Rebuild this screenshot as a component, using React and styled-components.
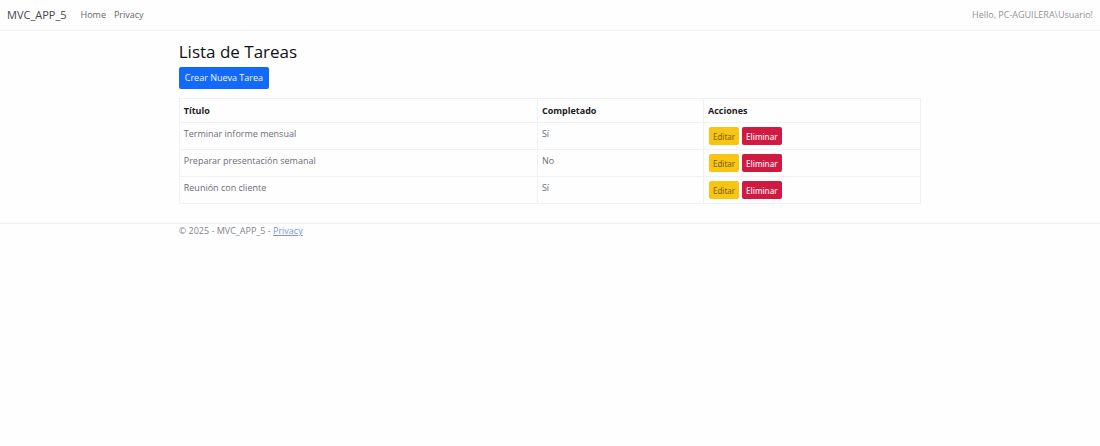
import styled, { createGlobalStyle } from 'styled-components';

const tareas = [
  { id: 1, titulo: 'Terminar informe mensual', completado: true },
  { id: 2, titulo: 'Preparar presentación semanal', completado: false },
  { id: 3, titulo: 'Reunión con cliente', completado: true },
];

const App = () => {
  return (
    <>
      <GlobalStyle />
      <Header>
        <Brand href="#home">MVC_APP_5</Brand>
        <Nav>
          <NavLink href="#home">Home</NavLink>
          <NavLink href="#privacy">Privacy</NavLink>
        </Nav>
        <Greeting>Hello, PC-AGUILERA\Usuario!</Greeting>
      </Header>
      <Main>
        <Title>Lista de Tareas</Title>
        <CreateButton type="button">Crear Nueva Tarea</CreateButton>
        <Table>
          <colgroup>
            <Col $width="48.3%" />
            <Col $width="22.4%" />
            <Col $width="29.3%" />
          </colgroup>
          <thead>
            <tr>
              <Th scope="col">Título</Th>
              <Th scope="col">Completado</Th>
              <Th scope="col">Acciones</Th>
            </tr>
          </thead>
          <tbody>
            {tareas.map((tarea) => (
              <tr key={tarea.id}>
                <Td>{tarea.titulo}</Td>
                <Td>{tarea.completado ? 'Sí' : 'No'}</Td>
                <Td>
                  <Actions>
                    <RowButton type="button">Editar</RowButton>
                    <RowButton type="button" $danger>
                      Eliminar
                    </RowButton>
                  </Actions>
                </Td>
              </tr>
            ))}
          </tbody>
        </Table>
      </Main>
      <Footer>
        <FooterText>
          © 2025 - MVC_APP_5 - <FooterLink href="#privacy">Privacy</FooterLink>
        </FooterText>
      </Footer>
    </>
  );
};

const GlobalStyle = createGlobalStyle`
  * {
    box-sizing: border-box;
  }
  body {
    margin: 0;
    background: #fefefe;
    color: #6c6c74;
    font-family: 'Segoe UI', 'Open Sans', sans-serif;
    font-size: 9px;
    line-height: 14px;
  }
`;
const Header = styled.header`
  display: flex;
  align-items: center;
  height: 31px;
  padding: 0 7px;
  border-bottom: 1px solid #f0f0f2;
`;
const Brand = styled.a`
  color: #46464c;
  font-size: 11px;
  text-decoration: none;
`;
const Nav = styled.nav`
  display: flex;
  flex: 1;
  gap: 8px;
  margin-left: 14px;
`;
const NavLink = styled.a`
  color: #66666c;
  text-decoration: none;
`;
const Greeting = styled.span`
  color: #929298;
`;
const Main = styled.main`
  width: 67.5%;
  margin: 0 auto;
  padding: 10px 0 19px;
`;
const Title = styled.h1`
  margin: 0 0 4px;
  color: #101014;
  font-size: 17px;
  font-weight: 400;
  line-height: 22px;
`;
const CreateButton = styled.button`
  display: block;
  height: 22px;
  padding: 0 6px;
  border: 0;
  border-radius: 2px;
  background: #1269fa;
  color: #f4f8ff;
  font: inherit;
`;
const Table = styled.table`
  width: 100%;
  margin-top: 9px;
  border-collapse: collapse;
  table-layout: fixed;
`;
const Col = styled.col`
  width: ${({ $width }) => $width};
`;
const Th = styled.th`
  padding: 5px 4px 4px;
  border: 1px solid #f1f0f4;
  color: #1c1c22;
  font-weight: 700;
  text-align: left;
`;
const Td = styled.td`
  padding: 4px;
  border: 1px solid #f1f0f4;
  vertical-align: top;
`;
const Actions = styled.div`
  display: flex;
  gap: 3px;
  padding-left: 1px;
`;
const RowButton = styled.button`
  height: 18px;
  padding: 0 4px;
  border: 0;
  border-radius: 2px;
  background: ${({ $danger }) => ($danger ? '#d01a42' : '#f9c513')};
  color: ${({ $danger }) => ($danger ? '#fff0f4' : '#7a6010')};
  font-family: 'Segoe UI', 'Noto Sans', sans-serif;
  font-size: 8px;
  font-weight: ${({ $danger }) => ($danger ? 500 : 400)};
`;
const Footer = styled.footer`
  border-top: 1px solid #f0f0f2;
`;
const FooterText = styled.div`
  width: 67.5%;
  margin: 0 auto;
  color: #85858b;
`;
const FooterLink = styled.a`
  color: #7b93f5;
`;

export default App;
